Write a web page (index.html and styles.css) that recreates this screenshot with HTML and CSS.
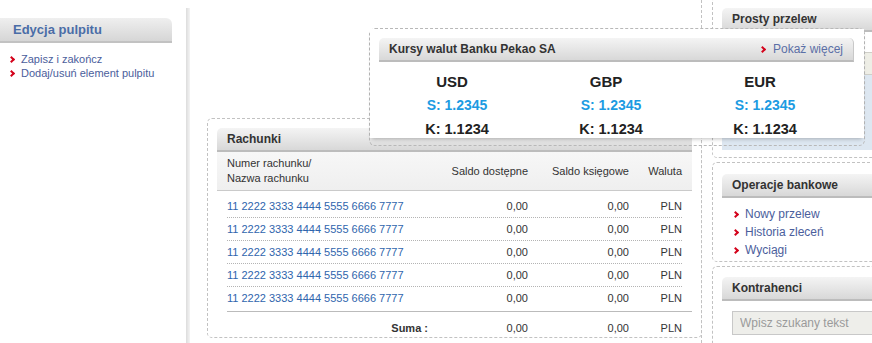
FILE: index.html
```html
<!DOCTYPE html>
<html lang="pl">
<head>
  <meta charset="UTF-8" />
  <title>Pulpit</title>
  <link rel="stylesheet" href="styles.css">
</head>
<body>
  <div class="page">
    <aside class="sidebar">
      <h2 class="side-title">Edycja pulpitu</h2>
      <ul class="link-list side-links">
        <li><a href="#">Zapisz i zakończ</a></li>
        <li><a href="#">Dodaj/usuń element pulpitu</a></li>
      </ul>
    </aside>

    <div class="divider"></div>

    <main class="main">
      <section class="widget accounts">
        <div class="widget-head">Rachunki</div>
        <div class="acc-head">
          <div class="acc-name">Numer rachunku/<br>Nazwa rachunku</div>
          <div class="num">Saldo dostępne</div>
          <div class="num">Saldo księgowe</div>
          <div class="num">Waluta</div>
        </div>
        <div class="acc-body">
          <div class="acc-row"><a href="#">11 2222 3333 4444 5555 6666 7777</a><span class="num">0,00</span><span class="num">0,00</span><span class="num">PLN</span></div>
          <div class="acc-row"><a href="#">11 2222 3333 4444 5555 6666 7777</a><span class="num">0,00</span><span class="num">0,00</span><span class="num">PLN</span></div>
          <div class="acc-row"><a href="#">11 2222 3333 4444 5555 6666 7777</a><span class="num">0,00</span><span class="num">0,00</span><span class="num">PLN</span></div>
          <div class="acc-row"><a href="#">11 2222 3333 4444 5555 6666 7777</a><span class="num">0,00</span><span class="num">0,00</span><span class="num">PLN</span></div>
          <div class="acc-row"><a href="#">11 2222 3333 4444 5555 6666 7777</a><span class="num">0,00</span><span class="num">0,00</span><span class="num">PLN</span></div>
        </div>
        <div class="acc-sum">
          <span class="sum-label">Suma :</span><span class="num">0,00</span><span class="num">0,00</span><span class="num">PLN</span>
        </div>
      </section>
    </main>

    <aside class="right-col">
      <section class="widget transfer">
        <div class="widget-head">Prosty przelew</div>
        <div class="transfer-body">
          <div class="fake-input"></div>
          <div class="transfer-panel"></div>
        </div>
      </section>

      <section class="widget ops">
        <div class="widget-head">Operacje bankowe</div>
        <ul class="link-list ops-links">
          <li><a href="#">Nowy przelew</a></li>
          <li><a href="#">Historia zleceń</a></li>
          <li><a href="#">Wyciągi</a></li>
        </ul>
      </section>

      <section class="widget contractors">
        <div class="widget-head">Kontrahenci</div>
        <input class="search" type="text" placeholder="Wpisz szukany tekst">
      </section>
    </aside>

    <!-- widget being dragged over the desktop -->
    <div class="drag-widget">
      <div class="drag-panel">
        <div class="widget-head rates-head">
          <span>Kursy walut Banku Pekao SA</span>
          <a class="more" href="#">Pokaż więcej</a>
        </div>
        <div class="rates">
          <div class="rate">
            <div class="code">USD</div>
            <div class="sell">S: 1.2345</div>
            <div class="buy">K: 1.1234</div>
          </div>
          <div class="rate">
            <div class="code">GBP</div>
            <div class="sell">S: 1.2345</div>
            <div class="buy">K: 1.1234</div>
          </div>
          <div class="rate">
            <div class="code">EUR</div>
            <div class="sell">S: 1.2345</div>
            <div class="buy">K: 1.1234</div>
          </div>
        </div>
      </div>
    </div>
  </div>
</body>
</html>
```

FILE: styles.css
```css
body {
  margin: 0;
  background-color: #fff;
  font-family: 'Liberation Sans', Arial, sans-serif;
  color: #333;
}

a {
  text-decoration: none;
}

.page {
  position: relative;
  display: flex;
  width: 872px;
  height: 343px;
  overflow: hidden;
}

/* Left sidebar */
.sidebar {
  width: 186px;
  flex-shrink: 0;
  padding-top: 18px;
}

.side-title {
  width: 159px;
  height: 23px;
  margin: 0;
  padding-left: 13px;
  line-height: 24px;
  font-size: 13px;
  font-weight: bold;
  color: #4a6da7;
  background: linear-gradient(#efefef, #d6d6d6);
  border-bottom: 2px solid #c2c2c2;
  border-top-right-radius: 6px;
}

.link-list {
  list-style: none;
  margin: 0;
  padding: 0;
}

.link-list a {
  color: #4b5e9c;
}

.link-list li::before {
  content: '';
  display: inline-block;
  width: 3px;
  height: 3px;
  border-top: 2px solid #d4031c;
  border-right: 2px solid #d4031c;
  transform: rotate(45deg);
  margin-right: 7px;
  vertical-align: 1px;
}

.side-links {
  margin-top: 9px;
  padding-left: 9px;
  font-size: 11px;
  line-height: 14px;
}

.divider {
  width: 4px;
  flex-shrink: 0;
  margin-top: 8px;
  background: linear-gradient(to right, #dcdcdc, #f4f4f4);
}

/* Widgets */
.widget {
  border: 1px dashed #c2c2c2;
  border-radius: 5px;
  padding: 9px 9px 0;
}

.widget-head {
  height: 22px;
  line-height: 23px;
  padding-left: 10px;
  font-size: 12px;
  font-weight: bold;
  color: #333;
  background: linear-gradient(#f4f4f4, #d8d8d8);
  border-bottom: 2px solid #bcbcbc;
  border-radius: 5px 5px 0 0;
}

/* Main column */
.main {
  width: 494px;
  flex-shrink: 0;
  padding: 118px 0 0 17px;
}

.accounts {
  width: 495px;
  box-sizing: border-box;
  height: 220px;
}

.acc-head,
.acc-row,
.acc-sum {
  display: grid;
  grid-template-columns: 1fr 100px 101px 53px;
  align-items: center;
  font-size: 11px;
}

.acc-head {
  height: 38px;
  padding: 0 10px;
  background: linear-gradient(#f7f7f7, #efefef);
  border-bottom: 1px solid #cacaca;
}

.acc-name {
  line-height: 15px;
}

.num {
  text-align: right;
}

.acc-body {
  padding-top: 4px;
}

.acc-row {
  height: 22px;
  margin: 0 10px;
  border-bottom: 1px dotted #b4b4b4;
}

.acc-row:last-child {
  border-bottom: none;
}

.acc-row a {
  color: #2f65ad;
}

.acc-sum {
  height: 21px;
  margin: 2px 0 0 10px;
  padding: 5px 10px 0 0;
  border-top: 1px solid #bbb;
}

.sum-label {
  text-align: right;
  font-weight: bold;
}

/* Right column */
.right-col {
  width: 170px;
  flex-shrink: 0;
  border-left: 1px dashed #c2c2c2;
}

.right-col .widget {
  width: 200px;
  margin-left: 10px;
}

.transfer {
  margin-top: -3px;
  padding-top: 10px;
  padding-bottom: 7px;
}

.transfer-body {
  padding-top: 20px;
}

.fake-input {
  height: 21px;
  background-color: #eeeee6;
  border: 1px solid #cfcfc8;
}

.transfer-panel {
  height: 75px;
  background-color: #dde7f1;
}

.ops {
  margin-top: 4px;
  padding-top: 11px;
  padding-bottom: 2px;
}

.ops-links {
  padding: 7px 0 0 11px;
  font-size: 12px;
  line-height: 18px;
}

.contractors {
  margin-top: 4px;
  padding-top: 10px;
  height: 80px;
}

.search {
  display: block;
  box-sizing: border-box;
  width: 180px;
  height: 24px;
  margin: 10px 0 0 10px;
  padding: 0 7px;
  font-family: 'Liberation Sans', Arial, sans-serif;
  font-size: 12px;
  background-color: #eeeeea;
  border: 1px solid #c8c8c8;
}

.search::placeholder {
  color: #9a9a9a;
}

/* Dragged widget */
.drag-widget {
  position: absolute;
  left: 369px;
  top: 28px;
  width: 496px;
  height: 118px;
  box-sizing: border-box;
  border: 1px dashed #b8b8b8;
  border-radius: 6px;
}

.drag-panel {
  height: 109px;
  padding: 9px 10px 0 9px;
  box-sizing: border-box;
  background-color: #fff;
  box-shadow: 0 3px 4px -2px rgba(0,0,0,0.25);
  overflow: hidden;
}

.rates-head {
  display: flex;
  justify-content: space-between;
  font-weight: normal;
  border-right: 1px solid #c8c8c8;
}

.rates-head span {
  font-weight: bold;
}

.more {
  padding-right: 10px;
  font-weight: normal;
  color: #5b6fa6;
}

.more::before {
  content: '';
  display: inline-block;
  width: 3px;
  height: 3px;
  border-top: 2px solid #d4031c;
  border-right: 2px solid #d4031c;
  transform: rotate(45deg);
  margin-right: 8px;
  vertical-align: 1px;
}

.rates {
  display: grid;
  grid-template-columns: repeat(3, 154px);
  margin-left: 1px;
  padding-top: 8px;
  text-align: center;
  font-weight: bold;
}

.code {
  line-height: 24px;
  padding-right: 10px;
  font-size: 15px;
  color: #222;
}

.sell {
  line-height: 23px;
  font-size: 14px;
  color: #1c9be2;
}

.buy {
  line-height: 24px;
  font-size: 14.5px;
  color: #222;
}
```
